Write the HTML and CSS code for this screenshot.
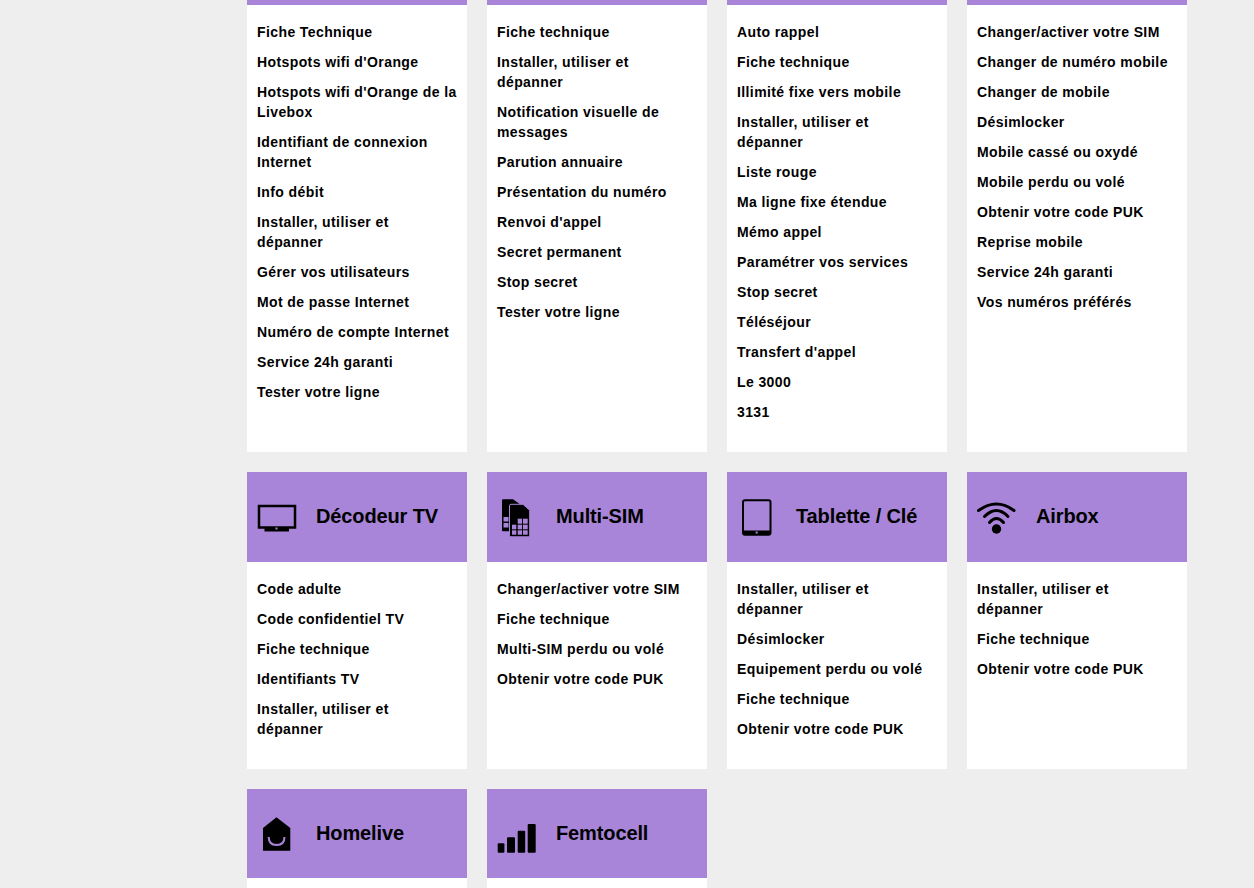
FILE: index.html
```html
<!DOCTYPE html>
<html lang="fr">
<head>
<meta charset="utf-8">
<title>Assistance</title>
<link rel="stylesheet" href="styles.css">
</head>
<body>
<main class="grid">
  <section class="card"><div class="head head-clipped"></div>
    <ul class="links">
      <li>Fiche Technique</li><li>Hotspots wifi d'Orange</li><li>Hotspots wifi d'Orange de la Livebox</li><li>Identifiant de connexion Internet</li><li>Info débit</li><li>Installer, utiliser et dépanner</li><li>Gérer vos utilisateurs</li><li>Mot de passe Internet</li><li>Numéro de compte Internet</li><li>Service 24h garanti</li><li>Tester votre ligne</li>
    </ul></section>
  <section class="card"><div class="head head-clipped"></div>
    <ul class="links">
      <li>Fiche technique</li><li>Installer, utiliser et dépanner</li><li>Notification visuelle de messages</li><li>Parution annuaire</li><li>Présentation du numéro</li><li>Renvoi d'appel</li><li>Secret permanent</li><li>Stop secret</li><li>Tester votre ligne</li>
    </ul></section>
  <section class="card"><div class="head head-clipped"></div>
    <ul class="links">
      <li>Auto rappel</li><li>Fiche technique</li><li>Illimité fixe vers mobile</li><li>Installer, utiliser et dépanner</li><li>Liste rouge</li><li>Ma ligne fixe étendue</li><li>Mémo appel</li><li>Paramétrer vos services</li><li>Stop secret</li><li>Téléséjour</li><li>Transfert d'appel</li><li>Le 3000</li><li>3131</li>
    </ul></section>
  <section class="card"><div class="head head-clipped"></div>
    <ul class="links">
      <li>Changer/activer votre SIM</li><li>Changer de numéro mobile</li><li>Changer de mobile</li><li>Désimlocker</li><li>Mobile cassé ou oxydé</li><li>Mobile perdu ou volé</li><li>Obtenir votre code PUK</li><li>Reprise mobile</li><li>Service 24h garanti</li><li>Vos numéros préférés</li>
    </ul></section>

  <section class="card"><div class="head">
      <svg class="icon" viewBox="0 0 40 40"><rect x="2" y="9" width="36" height="21.500" fill="none" stroke="#000" stroke-width="2.500"/><rect x="7.500" y="30" width="24.500" height="4.500" fill="#000"/><rect x="18.500" y="30.500" width="2" height="2" fill="#a885d8"/></svg>
      <h2>Décodeur TV</h2></div>
    <ul class="links">
      <li>Code adulte</li><li>Code confidentiel TV</li><li>Fiche technique</li><li>Identifiants TV</li><li>Installer, utiliser et dépanner</li>
    </ul></section>
  <section class="card"><div class="head">
      <svg class="icon" viewBox="0 0 40 40"><path d="M6 2.300h10l7 5v27H6a1 1 0 0 1-1-1V3.300a1 1 0 0 1 1-1z" fill="#000"/><g fill="#a885d8"><rect x="6.500" y="20" width="5" height="4.500"/><rect x="6.500" y="26" width="5" height="4.500"/></g><path d="M14 7.300h12l6.700 6v25a1.500 1.500 0 0 1-1.500 1.500H14a1.500 1.500 0 0 1-1.500-1.500V8.800a1.500 1.500 0 0 1 1.500-1.500z" fill="#000" stroke="#a885d8" stroke-width="1"/><g fill="#a885d8"><rect x="20.700" y="21.700" width="4.300" height="5"/><rect x="26" y="21.700" width="4.700" height="5"/><rect x="15" y="27.700" width="4.300" height="4.600"/><rect x="20.700" y="27.700" width="4.300" height="4.600"/><rect x="26" y="27.700" width="4.700" height="4.600"/><rect x="15" y="33.300" width="4.300" height="4.400"/><rect x="20.700" y="33.300" width="4.300" height="4.400"/><rect x="26" y="33.300" width="4.700" height="4.400"/></g></svg>
      <h2>Multi-SIM</h2></div>
    <ul class="links">
      <li>Changer/activer votre SIM</li><li>Fiche technique</li><li>Multi-SIM perdu ou volé</li><li>Obtenir votre code PUK</li>
    </ul></section>
  <section class="card"><div class="head">
      <svg class="icon" viewBox="0 0 40 40"><rect x="6" y="3.300" width="27.500" height="34.500" rx="2" fill="none" stroke="#000" stroke-width="2"/><rect x="6" y="33.500" width="27.500" height="4" fill="#000"/><rect x="18.700" y="34.500" width="2" height="2" fill="#a885d8"/></svg>
      <h2>Tablette / Clé</h2></div>
    <ul class="links">
      <li>Installer, utiliser et dépanner</li><li>Désimlocker</li><li>Equipement perdu ou volé</li><li>Fiche technique</li><li>Obtenir votre code PUK</li>
    </ul></section>
  <section class="card"><div class="head">
      <svg class="icon" viewBox="0 0 40 40"><g fill="none" stroke="#000" stroke-width="3" stroke-linecap="round"><path d="M1.500 13.500Q19.500 .5 37 13.500"/><path d="M7.500 19.500Q19.500 7.500 31 19.500"/><path d="M12.500 25.500Q19.500 17.500 26.500 25.500"/></g><circle cx="19.500" cy="32" r="4.700" fill="#000"/></svg>
      <h2>Airbox</h2></div>
    <ul class="links">
      <li>Installer, utiliser et dépanner</li><li>Fiche technique</li><li>Obtenir votre code PUK</li>
    </ul></section>

  <section class="card"><div class="head head-short">
      <svg class="icon" viewBox="0 0 40 40"><path d="M6 14 19.500 3.300 33.300 14v22.700H6z" fill="#000"/><path d="M11.700 23c0 5.500 3 8 7.800 8s8-2.500 8-8" fill="none" stroke="#a885d8" stroke-width="2"/></svg>
      <h2>Homelive</h2></div>
    <div class="card-rest"></div></section>
  <section class="card"><div class="head head-short">
      <svg class="icon" viewBox="0 0 40 40"><rect x=".700" y="29.300" width="6.700" height="9.400" rx="1" fill="#000"/><rect x="10" y="23.300" width="8" height="15.400" rx="1" fill="#000"/><rect x="20.700" y="16.700" width="7.500" height="22" rx="1" fill="#000"/><rect x="30.700" y="10" width="8" height="28.700" rx="1" fill="#000"/></svg>
      <h2>Femtocell</h2></div>
    <div class="card-rest"></div></section>
</main>
</body>
</html>
```
FILE: styles.css
```css
html, body {
  margin: 0;
  height: 888px;
  overflow: hidden;
  background: #eee;
}
body {
  font-family: "Liberation Sans", Arial, sans-serif;
  color: #000;
}
.grid {
  display: grid;
  grid-template-columns: repeat(4, 220px);
  gap: 20px;
  padding-left: 247px;
}
.card {
  background: #fff;
}
.head {
  display: flex;
  align-items: flex-start;
  gap: 19px;
  box-sizing: border-box;
  height: 90px;
  padding: 25px 10px 0;
  background: #a885d8;
}
.head-clipped {
  height: 5px;
  padding: 0;
}
.head-short {
  height: 89px;
}
.card-rest {
  height: 10px;
}
.icon {
  flex: none;
  width: 40px;
  height: 40px;
}
.head h2 {
  margin: 0;
  font-size: 20px;
  font-weight: 700;
  line-height: 38px;
  letter-spacing: -.12px;
}
.links {
  list-style: none;
  margin: 0;
  padding: 17px 10px 20px;
}
.links li {
  margin-bottom: 10px;
  font-size: 14px;
  font-weight: 700;
  line-height: 20px;
  letter-spacing: .4px;
}
```
